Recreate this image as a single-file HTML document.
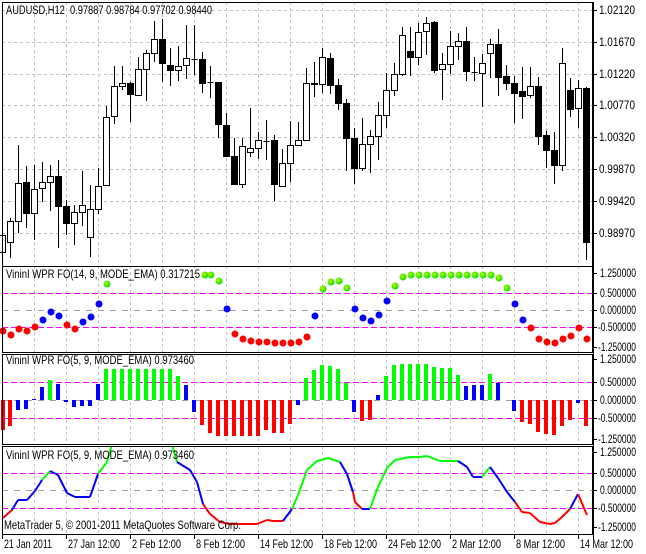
<!DOCTYPE html>
<html><head><meta charset="utf-8"><style>
html,body{margin:0;padding:0;background:#fff;width:646px;height:554px;overflow:hidden}
svg{display:block;font-family:"Liberation Sans",Tahoma,sans-serif;font-size:12px}
</style></head><body>
<svg id="s" width="646" height="554" xmlns="http://www.w3.org/2000/svg"></svg>
<script>
var S=document.getElementById('s'),h='';
function L(x1,y1,x2,y2,c,extra){h+='<line x1="'+x1+'" y1="'+y1+'" x2="'+x2+'" y2="'+y2+'" stroke="'+c+'" '+(extra||'')+'/>';}
function T(x,y,t,w,anchor){h+='<text x="'+x+'" y="'+y+'" fill="#000"'+(w?' textLength="'+w+'" lengthAdjust="spacingAndGlyphs"':'')+(anchor?' text-anchor="'+anchor+'"':'')+'>'+t+'</text>';}
h+='<defs><radialGradient id="g" cx="0.4" cy="0.4" r="0.6"><stop offset="0" stop-color="#ccff00"/><stop offset="1" stop-color="#00dd00"/></radialGradient></defs>';
var panels=[[2,266],[266,352],[354,444],[446,534]];
for(var p=0;p<4;p++){for(var x=34.5;x<592;x+=32)L(x,panels[p][0],x,panels[p][1],'#c0c0c0','stroke-dasharray="3,3"');}
[10,42,74,105,137,169,201,233].forEach(function(y){L(2,y+.5,592,y+.5,'#c0c0c0','stroke-dasharray="3,3"')});
[[293,327,310],[382,418,400],[473,508,490]].forEach(function(a){
L(2,a[0]+.5,592,a[0]+.5,'#ff00ff','stroke-dasharray="6,3"');L(2,a[1]+.5,592,a[1]+.5,'#ff00ff','stroke-dasharray="6,3"');L(2,a[2]+.5,592,a[2]+.5,'#a0a0a0','stroke-dasharray="6,6"');});
var C=[[235,252,235,256,0],[221,242,218,258,0],[183,221,145,233,0],[182,213,166,228,1],[189,213,165,240,0],[182,188,162,202,0],[176,182,165,211,0],[176,206,160,248,1],[206,223,200,235,1],[212,223,205,245,0],[205,212,171,226,0],[209,237,185,257,0],[186,209,168,214,0],[117,185,106,186,0],[86,116,66,124,0],[83,86,66,90,0],[83,94,82,122,1],[69,95,57,95,0],[53,69,50,101,0],[39,53,21,62,0],[39,63,19,82,1],[65,70,48,86,1],[66,70,46,81,0],[58,65,25,79,0],[59,59,25,75,0],[59,83,52,93,1],[82,82,66,98,1],[82,124,82,138,1],[125,156,113,157,1],[156,184,138,185,1],[146,184,138,188,0],[148,152,108,157,0],[140,148,132,159,0],[141,141,120,160,0],[140,184,135,201,1],[163,186,149,186,0],[145,163,121,182,0],[140,145,122,146,0],[83,140,68,141,0],[83,84,62,97,0],
[57,84,48,93,0],[58,85,53,94,1],[85,103,79,110,1],[103,138,99,171,1],[138,168,128,184,1],[144,168,118,171,0],[136,144,130,173,0],[115,136,102,160,0],[90,115,73,128,0],[74,90,63,96,0],[35,74,27,76,0],[51,57,27,76,1],[32,57,23,65,0],[23,31,17,55,0],[22,70,21,73,1],[64,69,53,100,0],[46,64,31,74,0],[41,46,33,60,0],[41,71,27,81,1],[72,72,57,81,0],[63,73,54,107,0],[44,53,39,78,0],[44,77,29,96,1],[76,83,65,90,1],[83,93,76,123,1],[91,96,67,119,1],[86,95,67,98,0],[86,136,77,145,1],[135,150,131,168,1],[150,165,132,184,1],[63,165,48,171,0],[90,109,78,117,1],[88,108,80,128,0],[88,242,87,260,1]];
C.forEach(function(c,i){var x=2+8*i+.5;L(x,c[2],x,c[3],'#000');
 if(c[1]-c[0]<1){L(x-3,c[0]+.5,x+3,c[0]+.5,'#000');}
 else h+='<rect x="'+(x-3)+'" y="'+(c[0]+.5)+'" width="6" height="'+(c[1]-c[0])+'" fill="'+(c[4]?'#000':'#fff')+'" stroke="#000"/>';});
var D=[[3,331,'r'],[11,335,'r'],[19,329,'r'],[27,331,'r'],[35,327,'r'],[43,320,'b'],[51,312,'b'],[59,316,'b'],[67,325,'r'],[75,329,'r'],[83,322,'b'],[91,317,'b'],[99,304,'b'],[107,284,'g'],[205,275,'g'],[211,275,'g'],[219,281,'g'],[227,309,'b'],[235,334,'r'],[243,339,'r'],[251,341,'r'],[259,342,'r'],[267,342,'r'],[275,343,'r'],[283,343,'r'],[291,343,'r'],[299,342,'r'],[307,337,'r'],[315,316,'b'],[323,289,'g'],[331,282,'g'],[339,281,'g'],[347,288,'g'],[355,309,'b'],[363,318,'b'],[371,321,'b'],[379,315,'b'],[387,301,'b'],[395,286,'g'],[403,277,'g']];
for(var x=411;x<=491;x+=8)D.push([x,275,'g']);
D=D.concat([[499,278,'g'],[507,288,'g'],[515,304,'b'],[523,320,'b'],[531,328,'r'],[539,339,'r'],[547,342,'r'],[555,343,'r'],[563,339,'r'],[571,336,'r'],[579,328,'r'],[587,339,'r']]);
var col={r:'#ff0000',b:'#0000ff',g:'url(#g)'};
D.forEach(function(d){h+='<circle cx="'+d[0]+'" cy="'+d[1]+'" r="3.5" fill="'+col[d[2]]+'"/>';});
var B=[[3,430,'r'],[10,426,'r'],[18,410,'b'],[26,409,'b'],[34,399,'b'],[42,387,'b'],[50,380,'g'],[58,384,'b'],[66,402,'b'],[74,407,'b'],[82,406,'b'],[90,406,'b'],[98,384,'b']];
for(var x=106;x<=170;x+=8)B.push([x,369,'g']);
B=B.concat([[178,376,'g'],[186,385,'b'],[194,412,'b'],[202,425,'r'],[210,433,'r'],[218,436,'r'],[226,436,'r'],[234,436,'r'],[242,436,'r'],[250,436,'r'],[258,436,'r'],[266,430,'r'],[274,433,'r'],[282,433,'r'],[290,424,'r'],[298,405,'b'],[306,378,'g'],[314,370,'g'],[322,365,'g'],[330,366,'g'],[338,369,'g'],[346,383,'g'],[354,412,'b'],[362,421,'r'],[370,420,'r'],[378,395,'b'],[386,376,'g'],[394,365,'g'],[402,364,'g'],[410,364,'g'],[418,364,'g'],[426,364,'g'],[434,367,'g'],[442,368,'g'],[450,368,'g'],[458,375,'g'],[466,386,'b'],[474,385,'b'],[482,385,'b'],[490,374,'g'],[498,383,'b'],[514,411,'b'],[522,422,'r'],[530,424,'r'],[538,432,'r'],[546,434,'r'],[554,435,'r'],[562,426,'r'],[570,420,'r'],[578,403,'b'],[586,426,'r']]);
var hc={r:'#ff0000',b:'#0000ff',g:'#00ff00'};
B.forEach(function(b){var y1=Math.min(b[1],400),y2=Math.max(b[1],400);h+='<rect x="'+(b[0]-2)+'" y="'+y1+'" width="4" height="'+Math.max(1,y2-y1)+'" fill="'+hc[b[2]]+'"/>';});
var P=[[3,518,'r'],[12,510,'b'],[18,500,'b'],[27,500,'b'],[35,491,'b'],[42,480,'g'],[50,471,'b'],[58,475,'b'],[67,493,'b'],[75,497,'b'],[90,497,'b'],[98,474,'g'],[107,462,'g'],[112,444,'g'],[172,444,'g'],[177,462,'b'],[190,470,'b'],[197,482,'b'],[203,504,'r'],[210,514,'r'],[220,522,'r'],[230,524,'r'],[257,524,'r'],[267,520,'r'],[273,521,'r'],[283,521,'b'],[292,509,'g'],[298,495,'g'],[307,470,'g'],[317,461,'g'],[328,458,'g'],[340,462,'b'],[347,474,'b'],[353,492,'r'],[355,502,'r'],[362,509,'b'],[370,509,'g'],[378,487,'g'],[387,468,'g'],[395,460,'g'],[410,457,'g'],[420,457,'g'],[427,456,'g'],[440,461,'g'],[450,461,'g'],[458,461,'b'],[467,467,'b'],[473,477,'b'],[482,477,'g'],[490,467,'b'],[498,478,'b'],[507,492,'b'],[515,502,'r'],[522,512,'r'],[530,513,'r'],[540,522,'r'],[550,524,'r'],[555,523,'r'],[562,517,'r'],[570,509,'b'],[578,494,'r'],[587,515,'r']];
h+='<clipPath id="c3"><rect x="2" y="447" width="590" height="87"/></clipPath><g clip-path="url(#c3)">';
for(var i=0;i<P.length-1;i++)L(P[i][0],P[i][1],P[i+1][0],P[i+1][1],hc[P[i][2]],'stroke-width="2"');
h+='</g>';
panels.forEach(function(p){h+='<rect x="2.5" y="'+(p[0]+.5)+'" width="590" height="'+(p[1]-p[0])+'" fill="none" stroke="#000"/>';});
L(593.5,2,593.5,540,'#000');
T(6,14,'AUDUSD,H12&#160; 0.97887 0.98784 0.97702 0.98440',206);
T(6,278,'VininI WPR FO(14, 9, MODE_EMA) 0.317215',194);
T(6,364,'VininI WPR FO(5, 9, MODE_EMA) 0.973460',188);
T(6,459,'VininI WPR FO(5, 9, MODE_EMA) 0.973460',188);
T(4,529,'MetaTrader 5, © 2001-2011 MetaQuotes Software Corp.',237);
['1.02120','1.01670','1.01220','1.00770','1.00320','0.99870','0.99420','0.98970'].forEach(function(t,i){var y=[10,42,74,105,137,169,201,233][i];L(593,y+.5,597,y+.5,'#000');T(599,y+4,t,36);});
[[273,293,310,327,347],[359,382,400,418,439],[452,473,490,508,527]].forEach(function(a){
 var t=['1.250000','0.500000','0.000000','-0.500000','-1.250000'];
 a.forEach(function(y,i){L(593,y+.5,597,y+.5,'#000');T(i<3?600:598,y+4,t[i],i<3?36:38);});});
var tl=['21 Jan 2011','27 Jan 12:00','2 Feb 12:00','8 Feb 12:00','14 Feb 12:00','18 Feb 12:00','24 Feb 12:00','2 Mar 12:00','8 Mar 12:00','14 Mar 12:00'];
var tw=[48,52,49,49,53,53,53,49,49,53];
tl.forEach(function(t,i){var x=i==0?2:66+64*(i-1);L(x+.5,535,x+.5,539,'#000');T(x+2,548,t,tw[i]);});
S.innerHTML=h;
</script>
</body></html>
